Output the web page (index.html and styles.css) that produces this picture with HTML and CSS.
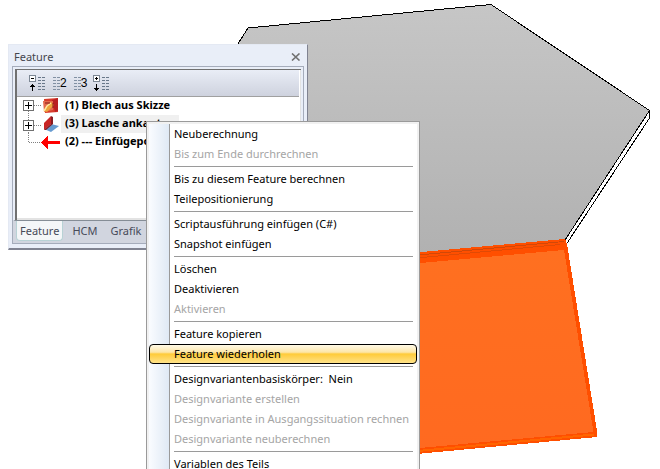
FILE: index.html
```html
<!DOCTYPE html>
<html lang="de">
<head>
    <meta charset="UTF-8">
    <meta name="viewport" content="width=device-width, initial-scale=1.0">
    <title>Feature</title>
    <link rel="stylesheet" href="styles.css">
</head>
<body>
    <svg class="scene" viewBox="0 0 660 469" preserveAspectRatio="xMinYMin slice" aria-hidden="true">
        <defs>
            <linearGradient id="sheet" x1="0" y1="0" x2="0" y2="1">
                <stop offset="0" stop-color="#c6c6c6"/>
                <stop offset="1" stop-color="#b0b0b0"/>
            </linearGradient>
            <linearGradient id="flap" x1="0" y1="0" x2="0" y2="1">
                <stop offset="0" stop-color="#ff7020"/>
                <stop offset="1" stop-color="#ff6920"/>
            </linearGradient>
        </defs>
        <!-- base sheet -->
        <path d="M248 28L491 4.500L649.500 110.500L565 240L300 265L200 104Z" fill="url(#sheet)"/>
        <g fill="none" stroke="#000" shape-rendering="crispEdges">
            <path d="M200 104L248 28L491 4.500L649.500 110.500L565 240"/>
            <path d="M649.500 110.500V118L566.500 244"/>
        </g>
        <!-- bent flap -->
        <g shape-rendering="crispEdges">
            <path d="M300 263L565 239L567 244L597 431V437L300 465Z" fill="#ff4f00"/>
            <path d="M300 274L564 250L593.500 432L300 459Z" fill="url(#flap)"/>
            <path d="M300 266L564 241.500" fill="none" stroke="#d04808"/>
            <path d="M300 269L560 244.500" fill="none" stroke="#e04a05"/>
            <path d="M300 462L594 434.500" fill="none" stroke="#ff6500" stroke-width="2"/>
        </g>
    </svg>

    <section class="panel">
        <header class="panel-title">
            <span>Feature</span>
            <button type="button" class="close" aria-label="Schließen">
                <svg width="10" height="8" viewBox="0 0 10 8"><path d="M1 0.500L8.500 7.500M8.500 0.500L1 7.500" stroke="#707070" stroke-width="1.600"/></svg>
            </button>
        </header>
        <div class="panel-frame">
            <div class="panel-list">
                <div class="toolbar">
                    <button type="button" aria-label="Alles einklappen">
                        <svg width="17" height="17" viewBox="0 0 17 17" shape-rendering="crispEdges">
                            <rect x="0.500" y="0.500" width="6" height="6" fill="#fff" stroke="#7c8794"/>
                            <path d="M2 3.500H5" stroke="#000"/>
                            <path d="M3 9h1v1h1v1h1v1H4v4H3v-4H1v-1h1v-1h1z" fill="#000"/>
                            <path d="M10.500 2v14M14.500 2v14" stroke="#69788a" stroke-width="3" stroke-dasharray="1 2"/>
                        </svg>
                    </button>
                    <button type="button" class="level" aria-label="Ebene 2">
                        <svg width="8" height="14" viewBox="0 0 8 14" shape-rendering="crispEdges"><path d="M2.500 1v13M6.500 1v13" stroke="#8190a3" stroke-width="3" stroke-dasharray="1 2"/></svg><span>2</span>
                    </button>
                    <button type="button" class="level" aria-label="Ebene 3">
                        <svg width="8" height="14" viewBox="0 0 8 14" shape-rendering="crispEdges"><path d="M2.500 1v13M6.500 1v13" stroke="#8190a3" stroke-width="3" stroke-dasharray="1 2"/></svg><span>3</span>
                    </button>
                    <button type="button" aria-label="Alles ausklappen">
                        <svg width="17" height="17" viewBox="0 0 17 17" shape-rendering="crispEdges">
                            <rect x="0.500" y="0.500" width="6" height="6" fill="#fff" stroke="#7c8794"/>
                            <path d="M2 3.500H5M3.500 2V5" stroke="#000"/>
                            <path d="M3 9h1v4h2v1H5v1H4v1H3v-1H2v-1H1v-1h2z" fill="#000"/>
                            <path d="M10.500 2v14M14.500 2v14" stroke="#69788a" stroke-width="3" stroke-dasharray="1 2"/>
                        </svg>
                    </button>
                </div>
                <ul class="tree">
                    <li>
                        <svg width="44" height="18" viewBox="0 0 44 18" shape-rendering="crispEdges">
                            <path d="M11.500 14V18M17 8.500H24" stroke="#808080" stroke-dasharray="1 1"/>
                            <rect x="6.500" y="3.500" width="10" height="10" fill="#fff" stroke="#707070"/>
                            <path d="M8 8.500H15M11.500 5V12" stroke="#000"/>
                            <g shape-rendering="auto">
                                <path d="M27 2L41 1V15L28 16Z" fill="#d83b2b"/>
                                <path d="M35 3L41 1V14L38 15Z" fill="#b91f22"/>
                                <path d="M26 4L36 4V13L27 15Z" fill="#e4694c"/>
                                <path d="M27 14L34 5L37 8L30 15Z" fill="#eda43b"/>
                                <path d="M27 14L30 9L34 6" fill="none" stroke="#ffec9f" stroke-width="1.500"/>
                                <path d="M28 6H33M36 6V11" fill="none" stroke="#851b17"/>
                            </g>
                        </svg>
                        <span>(1) Blech aus Skizze</span>
                    </li>
                    <li class="current">
                        <svg width="44" height="18" viewBox="0 0 44 18" shape-rendering="crispEdges">
                            <path d="M11.500 0V5M11.500 15V18M17 10.500H24" stroke="#808080" stroke-dasharray="1 1"/>
                            <rect x="6.500" y="5.500" width="10" height="10" fill="#fff" stroke="#707070"/>
                            <path d="M8 10.500H15M11.500 7V14" stroke="#000"/>
                            <g shape-rendering="auto">
                                <path d="M27 14L34 9L42 11L34 17Z" fill="#669bd0"/>
                                <path d="M27 8L34 1V9L27 15Z" fill="#c82525"/>
                                <path d="M34 1L36 2V9L29 15L27 15L34 9Z" fill="#871c22"/>
                            </g>
                        </svg>
                        <span>(3) Lasche ankanten</span>
                    </li>
                    <li>
                        <svg width="44" height="18" viewBox="0 0 44 18" shape-rendering="crispEdges">
                            <path d="M11.500 0V9.500H25" fill="none" stroke="#808080" stroke-dasharray="1 1"/>
                            <path d="M24 9.500L31 3V8H43V11H31V16Z" fill="#f00"/>
                        </svg>
                        <span>(2) --- Einfügeposition</span>
                    </li>
                </ul>
            </div>
            <nav class="tabs">
                <button type="button" class="active">Feature</button>
                <button type="button">HCM</button>
                <button type="button">Grafik</button>
            </nav>
        </div>
    </section>

    <menu class="context-menu">
        <li><button type="button">Neuberechnung</button></li>
        <li><button type="button" disabled>Bis zum Ende durchrechnen</button></li>
        <li class="separator"></li>
        <li><button type="button">Bis zu diesem Feature berechnen</button></li>
        <li><button type="button">Teilepositionierung</button></li>
        <li class="separator"></li>
        <li><button type="button">Scriptausführung einfügen (C#)</button></li>
        <li><button type="button">Snapshot einfügen</button></li>
        <li class="separator"></li>
        <li><button type="button">Löschen</button></li>
        <li><button type="button">Deaktivieren</button></li>
        <li><button type="button" disabled>Aktivieren</button></li>
        <li class="separator"></li>
        <li><button type="button">Feature kopieren</button></li>
        <li><button type="button" class="hot">Feature wiederholen</button></li>
        <li class="separator"></li>
        <li><button type="button">Designvariantenbasiskörper:&nbsp; Nein</button></li>
        <li><button type="button" disabled>Designvariante erstellen</button></li>
        <li><button type="button" disabled>Designvariante in Ausgangssituation rechnen</button></li>
        <li><button type="button" disabled>Designvariante neuberechnen</button></li>
        <li class="separator"></li>
        <li><button type="button">Variablen des Teils</button></li>
    </menu>
</body>
</html>
```
FILE: styles.css
```css
* {
    box-sizing: border-box;
}

body {
    margin: 0;
    height: 100vh;
    overflow: hidden;
    background: #fff;
    font-family: "Noto Sans", "Open Sans", sans-serif;
    font-size: 11px;
    color: #000;
}

button {
    margin: 0;
    padding: 0;
    border: none;
    background: none;
    font: inherit;
    color: inherit;
}

svg {
    display: block;
    flex: none;
}

.scene {
    width: 100%;
    height: 100%;
}

/* Feature panel */
.panel {
    position: absolute;
    left: 8px;
    top: 44px;
    width: 300px;
    padding: 0 3px 4px;
    border: 1px solid #e4e9f3;
    border-right-color: #808391;
    border-bottom: 2px solid #808391;
    background: #e9eef8;
}

.panel-title {
    display: flex;
    justify-content: space-between;
    align-items: center;
    height: 21px;
    padding: 3px 1px 0 2px;
    line-height: 18px;
    color: #45464e;
}

.close {
    padding: 0 2px;
}

.panel-frame {
    border: 1px solid #a5acbb;
    background: #d1d5df;
}

.panel-list {
    height: 154px;
    overflow: hidden;
    border: 2px solid #e9eef8;
    border-bottom: 1px solid #858d96;
    background: #fff;
    box-shadow: inset 2px 1px 0 #707070, inset -1px -2px 0 #e3e3e3;
}

.toolbar {
    display: flex;
    align-items: center;
    gap: 6px;
    height: 27px;
    margin: 1px 2px 0;
    padding: 0 12px;
    border-bottom: 1px solid #a0a0a0;
    background: linear-gradient(#e9edf6, #ced2de);
}

.level {
    display: flex;
    align-items: center;
    font-family: "Liberation Sans", Arial, sans-serif;
    font-size: 12px;
    line-height: 16px;
}

.tree {
    margin: 0 0 0 2px;
    padding: 0;
    list-style: none;
    font-weight: bold;
}

.tree li {
    display: flex;
    align-items: center;
    height: 18px;
    line-height: 16px;
    white-space: nowrap;
}

.tree span {
    padding: 0 4px 2px;
}

.tree .current span {
    background: #f0f0f0;
}

.tabs {
    display: flex;
    height: 22px;
    padding: 0 3px 2px;
    gap: 2px;
    color: #474a59;
}

.tabs button {
    padding: 0 4px 0 7px;
    line-height: 20px;
}

.tabs .active {
    padding: 0 3px;
    border: 1px solid #b8d2d5;
    border-top: none;
    border-radius: 0 0 4px 4px;
    background: #f4f6f8;
}

/* Context menu */
.context-menu {
    position: absolute;
    left: 146px;
    top: 121px;
    width: 274px;
    margin: 0;
    padding: 2px;
    list-style: none;
    border: 1px solid #9a9a9a;
    outline: 2px solid #f1f1f1;
    outline-offset: -3px;
    background: linear-gradient(90deg, #fff 2px, #fafcff 2px, #dfe9f5 22px, #9a9a9a 22px, #9a9a9a 23px, #fff 23px);
}

.context-menu button {
    display: block;
    width: 100%;
    height: 20px;
    padding: 0 0 0 25px;
    line-height: 20px;
    text-align: left;
    white-space: nowrap;
}

.context-menu button:disabled {
    color: #a5a5a5;
}

.context-menu .hot {
    padding-left: 24px;
    border: 1px solid #000;
    border-radius: 4px;
    line-height: 18px;
    background: linear-gradient(#fffae8, #fde6a8 40%, #ffcb39 50%, #ffe38a);
}

.separator {
    height: 5px;
    margin: 0 4px 0 25px;
    border-top: 2px solid transparent;
    background: linear-gradient(#9a9a9a, #9a9a9a) top / 100% 1px no-repeat;
}
```
